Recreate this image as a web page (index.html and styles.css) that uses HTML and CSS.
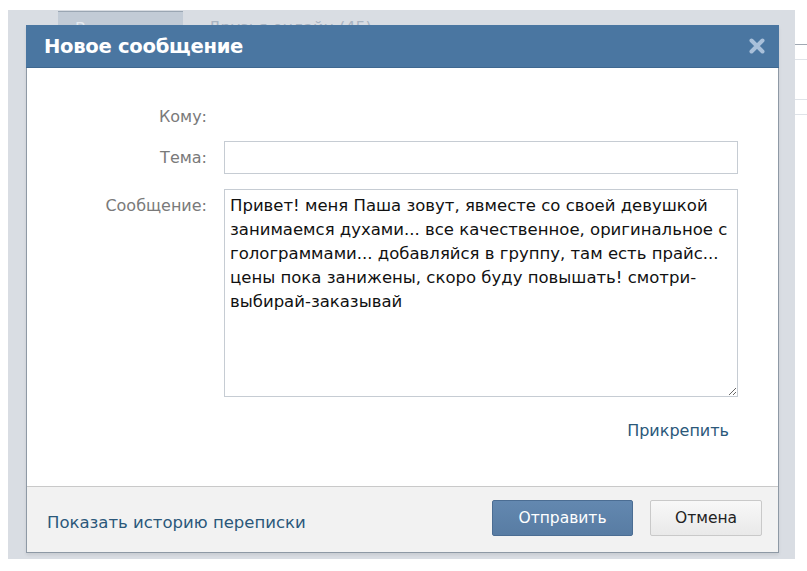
FILE: index.html
```html
<!DOCTYPE html>
<html lang="ru">
<head>
<meta charset="utf-8">
<title>Новое сообщение</title>
<link rel="stylesheet" href="styles.css">
</head>
<body>
<div class="page">
  <div class="backdrop">
    <div class="tabs">
      <div class="tab tab-active">Все друзья</div>
      <div class="tab">Друзья онлайн (45)</div>
    </div>
  </div>
  <div class="side-lines">
    <span class="sl sl-dark"></span>
    <span class="sl"></span>
    <span class="sl sl-gap"></span>
    <span class="sl"></span>
  </div>

  <div class="modal">
    <div class="modal-head">
      <div class="modal-title">Новое сообщение</div>
      <svg class="close" width="16" height="16" viewBox="0 0 16 16" aria-hidden="true">
        <path d="M2.5 2.5 L13.5 13.5 M13.5 2.5 L2.5 13.5" stroke="#a9c0da" stroke-width="4" stroke-linecap="round"/>
      </svg>
    </div>
    <div class="modal-body">
      <div class="form-row row-to">
        <div class="label">Кому:</div>
        <div class="field"></div>
      </div>
      <div class="form-row row-subject">
        <div class="label">Тема:</div>
        <input class="input" type="text">
      </div>
      <div class="form-row row-message">
        <div class="label label-top">Сообщение:</div>
        <textarea class="textarea" readonly>Привет! меня Паша зовут, явместе со своей девушкой
занимаемся духами... все качественное, оригинальное с
голограммами... добавляйся в группу, там есть прайс...
цены пока занижены, скоро буду повышать! смотри-
выбирай-заказывай</textarea>
      </div>
      <div class="attach-row">
        <span class="link">Прикрепить</span>
      </div>
    </div>
    <div class="modal-foot">
      <span class="link history">Показать историю переписки</span>
      <div class="buttons">
        <button class="btn btn-primary" type="button">Отправить</button>
        <button class="btn btn-cancel" type="button">Отмена</button>
      </div>
    </div>
  </div>
</div>
</body>
</html>
```
FILE: styles.css
```css
* { box-sizing: border-box; }

html, body {
  margin: 0;
  padding: 0;
  background: #ffffff;
}

body {
  font-family: "DejaVu Sans", "Liberation Sans", sans-serif;
  color: #000;
  width: 807px;
  height: 571px;
  overflow: hidden;
}

.page {
  position: relative;
  width: 807px;
  height: 571px;
  padding: 10px 12px 0 8px;
}

.backdrop {
  height: 549px;
  background: #d9dde3;
  padding: 1px 0 0 50px;
}

.tabs {
  display: flex;
}

.tab {
  height: 40px;
  padding: 7px 25px 0 25px;
  font-size: 16px;
  color: #a9b4c2;
  white-space: nowrap;
}

.tab-active {
  background: #c2cbd6;
  border-top: 1px solid #9aa6b3;
  color: #e6eaf0;
  width: 125px;
  padding: 7px 0 0 17px;
}

.side-lines {
  position: absolute;
  left: 795px;
  top: 44px;
  width: 12px;
  display: flex;
  flex-direction: column;
}

.sl {
  display: block;
  height: 1px;
  background: #dfe3e8;
  margin-bottom: 14px;
}

.sl-dark { background: #a0a8b2; }
.sl-gap { margin-top: 25px; }

/* modal */
.modal {
  position: absolute;
  left: 26px;
  top: 25px;
  width: 753px;
  height: 528px;
  background: #fff;
  border: 1px solid #8e99a5;
  border-top: none;
  display: flex;
  flex-direction: column;
  box-shadow: 0 2px 3px rgba(0,0,0,0.08);
}

.modal-head {
  height: 43px;
  margin: 0 -1px;
  background: #4a76a1;
  border-bottom: 1px solid #3f6890;
  display: flex;
  align-items: center;
  justify-content: space-between;
  padding: 0 14px 0 18px;
}

.modal-title {
  color: #fff;
  font-weight: bold;
  font-size: 19.6px;
  letter-spacing: -0.3px;
}

.close { display: block; }

.modal-body {
  flex: 1;
  padding: 32px 41px 0 0;
  display: flex;
  flex-direction: column;
}

.form-row {
  display: grid;
  grid-template-columns: 180px 1fr;
  column-gap: 17px;
  align-items: center;
}

.row-to { height: 33px; margin-bottom: 8px; }
.row-subject { margin-bottom: 15px; }
.row-message { align-items: start; }

.label {
  text-align: right;
  font-size: 16px;
  color: #7a7a7a;
}

.label-top { padding-top: 7px; }

.input {
  height: 33px;
  width: 514px;
  border: 1px solid #c6ccd3;
  background: #fff;
  font: inherit;
  padding: 0 5px;
  margin: 0;
}

.textarea {
  width: 514px;
  height: 208px;
  border: 1px solid #c6ccd3;
  margin: 0;
  padding: 4px 5px;
  font-family: "DejaVu Sans", "Liberation Sans", sans-serif;
  font-size: 16.5px;
  line-height: 24px;
  color: #111;
  resize: both;
  overflow: hidden;
  white-space: pre;
}

.attach-row {
  display: flex;
  justify-content: flex-end;
  margin-top: 24px;
  padding-right: 8px;
}

.link {
  color: #2b587a;
  font-size: 16px;
}

.modal-foot {
  height: 66px;
  background: #f2f2f2;
  border-top: 1px solid #c9c9c9;
  display: flex;
  align-items: center;
  justify-content: space-between;
  padding: 0 16px 0 20px;
}

.history { font-size: 16.5px; margin-top: 6px; }

.buttons {
  display: flex;
  gap: 17px;
  margin-top: -4px;
}

.btn {
  height: 36px;
  font-family: "DejaVu Sans", "Liberation Sans", sans-serif;
  font-size: 15.5px;
  border-radius: 2px;
  padding: 0;
  margin: 0;
  cursor: pointer;
}

.btn-primary {
  width: 141px;
  color: #fff;
  background: linear-gradient(#6388b0, #587ca3);
  border: 1px solid #4b6d93;
}

.btn-cancel {
  width: 112px;
  color: #222;
  background: linear-gradient(#f8f8f8, #e9e9e9);
  border: 1px solid #c9c9c9;
}
```
